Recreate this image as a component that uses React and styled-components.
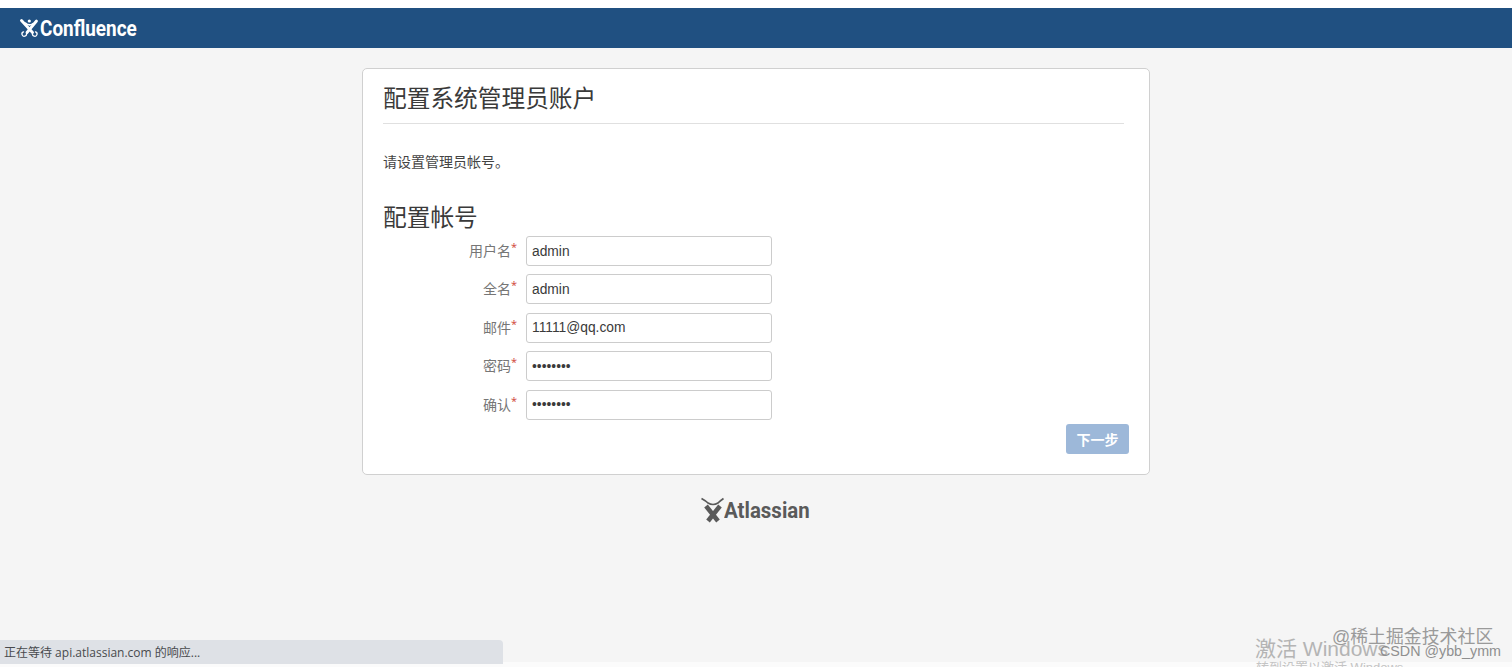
import React from "react";
import styled, { createGlobalStyle } from "styled-components";

const CJK = `"Open Sans", "Noto Sans CJK SC", sans-serif`;

const Global = createGlobalStyle`
  html, body { margin: 0; padding: 0; height: 667px; overflow: hidden; background: #fff; }
  * { box-sizing: border-box; }
  body { font-family: "Liberation Sans", "Noto Sans CJK SC", sans-serif; color: #333; }
`;

const Page = styled.div`
  position: relative;
  height: 667px;
  overflow: hidden;
  display: flex;
  flex-direction: column;
  padding-top: 8px;
  background: #fff;
`;

const Header = styled.header`
  height: 40px;
  flex: none;
  background: #205081;
  display: flex;
  align-items: center;
  padding-left: 20px;
  gap: 1px;
  svg { flex: none; }
`;

const Brand = styled.span`
  font-family: "Roboto", sans-serif;
  font-weight: 700;
  font-size: 22px;
  color: #fff;
  display: inline-block;
  transform-origin: left center;
  transform: scaleX(0.86);
`;

const Main = styled.main`
  flex: 1;
  background: #f5f5f5;
  padding-top: 20px;
  display: flex;
  flex-direction: column;
  align-items: center;
`;

const Card = styled.section`
  width: 788px;
  height: 407px;
  background: #fff;
  border: 1px solid #d0d0d0;
  border-radius: 5px;
  padding: 0 20px;
  display: flex;
  flex-direction: column;
`;

const PageTitle = styled.h1`
  margin: 0;
  height: 55px;
  width: 741px;
  border-bottom: 1px solid #e0e0e0;
  font-family: ${CJK};
  font-weight: 400;
  font-size: 23.7px;
  line-height: 58px;
  color: #3a3a3a;
`;

const Intro = styled.p`
  margin: 28px 0 0;
  font-family: ${CJK};
  font-size: 14px;
  line-height: 20px;
  color: #444;
`;

const FormTitle = styled.h2`
  margin: 28px 0 0;
  font-family: ${CJK};
  font-weight: 400;
  font-size: 23.7px;
  line-height: 34px;
  color: #3a3a3a;
`;

const Form = styled.form`
  margin-top: 2px;
  display: flex;
  flex-direction: column;
  gap: 8.4px;
`;

const Row = styled.div`
  display: flex;
  align-items: center;
  height: 30px;
  margin-left: -1px;
`;

const Label = styled.label`
  width: 135px;
  text-align: right;
  font-family: ${CJK};
  font-size: 14px;
  color: #767676;
  line-height: 30px;
  margin-right: 9px;
`;

const Star = styled.sup`
  color: #d04437;
  font-size: 11px;
  line-height: 0;
  vertical-align: 5px;
`;

const Field = styled.input`
  width: 246px;
  height: 30px;
  border: 1px solid #cccccc;
  border-radius: 3px;
  background: #fff;
  padding: 0 5px;
  font-family: "Liberation Sans", sans-serif;
  font-size: 13.8px;
  color: #3a3a3a;
  outline: none;
`;

const Actions = styled.div`
  display: flex;
  justify-content: flex-end;
  margin-top: 4px;
`;

const NextButton = styled.button`
  width: 63px;
  height: 30px;
  border: none;
  border-radius: 3px;
  background: #9db8d9;
  color: #fff;
  font-family: ${CJK};
  font-weight: 700;
  font-size: 14px;
  padding: 0;
`;

const Vendor = styled.div`
  margin-top: 20px;
  width: 110px;
  height: 28px;
  display: flex;
  align-items: flex-end;
  svg { flex: none; }
`;

const VendorName = styled.span`
  font-family: "Roboto", sans-serif;
  font-weight: 700;
  font-size: 22px;
  line-height: 24px;
  color: #5a5a5a;
  display: inline-block;
  transform-origin: left center;
  transform: scaleX(0.93);
`;

const BottomStrip = styled.div`
  height: 5px;
  flex: none;
  background: #fbfbfb;
`;

const StatusBar = styled.div`
  position: absolute;
  left: 0;
  bottom: 3px;
  width: 503px;
  height: 24px;
  background: #dee1e6;
  border-top-right-radius: 4px;
  padding-left: 4px;
  font-family: ${CJK};
  font-size: 12px;
  line-height: 25px;
  color: #484a4d;
`;

const Watermark = styled.span`
  position: absolute;
  white-space: nowrap;
  font-family: "Liberation Sans", "Noto Sans CJK SC", sans-serif;
  font-size: ${(p) => p.$size}px;
  line-height: 1;
  color: ${(p) => p.$color};
  left: ${(p) => p.$x}px;
  top: ${(p) => p.$y}px;
`;

const ConfluenceMark = () => (
  <svg width="19" height="20" viewBox="0 0 19 20" fill="none" stroke="#fff" strokeLinecap="round">
    <path d="M1.5 2.5 L12.5 14.5" strokeWidth="2.8" />
    <path d="M16.5 3 L7 14.5" strokeWidth="2.8" />
    <path d="M5.5 5 Q9 8.5 13 5.5" strokeWidth="1.5" />
    <circle cx="9.3" cy="3" r="1.6" fill="#fff" stroke="none" />
    <path d="M6.5 15.5 A2.3 2.3 0 1 1 3.5 13.8" strokeWidth="1.3" />
    <path d="M12.5 15.5 A2.3 2.3 0 1 0 15.5 13.8" strokeWidth="1.3" />
  </svg>
);

const AtlassianMark = () => (
  <svg width="23" height="26" viewBox="0 0 23 26" fill="none" stroke="#5a5a5a">
    <path d="M0.5 1.5 Q5 4 7 6 Q12 9 17 6 Q19 4 22.5 1.5" strokeWidth="1.7" />
    <path d="M5 9 L17 24" strokeWidth="4.6" />
    <path d="M19 9 L7 24" strokeWidth="4.6" />
  </svg>
);

const fields = [
  { label: "用户名", value: "admin", type: "text" },
  { label: "全名", value: "admin", type: "text" },
  { label: "邮件", value: "11111@qq.com", type: "text" },
  { label: "密码", value: "12345678", type: "password" },
  { label: "确认", value: "12345678", type: "password" },
];

export default function App() {
  return (
    <Page>
      <Global />
      <Header>
        <ConfluenceMark />
        <Brand>Confluence</Brand>
      </Header>
      <Main>
        <Card>
          <PageTitle>配置系统管理员账户</PageTitle>
          <Intro>请设置管理员帐号。</Intro>
          <FormTitle>配置帐号</FormTitle>
          <Form>
            {fields.map((f) => (
              <Row key={f.label}>
                <Label>
                  {f.label}
                  <Star>*</Star>
                </Label>
                <Field type={f.type} defaultValue={f.value} />
              </Row>
            ))}
          </Form>
          <Actions>
            <NextButton type="button">下一步</NextButton>
          </Actions>
        </Card>
        <Vendor>
          <AtlassianMark />
          <VendorName>Atlassian</VendorName>
        </Vendor>
      </Main>
      <BottomStrip />
      <StatusBar>正在等待 api.atlassian.com 的响应...</StatusBar>
      <Watermark $size={21} $color="#b4b4b4" $x={1255} $y={638}>激活 Windows</Watermark>
      <Watermark $size={13} $color="#c4c4c4" $x={1256} $y={661}>转到设置以激活 Windows</Watermark>
      <Watermark $size={17.9} $color="#9a9a9a" $x={1332} $y={629}>@稀土掘金技术社区</Watermark>
      <Watermark $size={14.3} $color="#8f8f8f" $x={1380} $y={644}>CSDN @ybb_ymm</Watermark>
    </Page>
  );
}
